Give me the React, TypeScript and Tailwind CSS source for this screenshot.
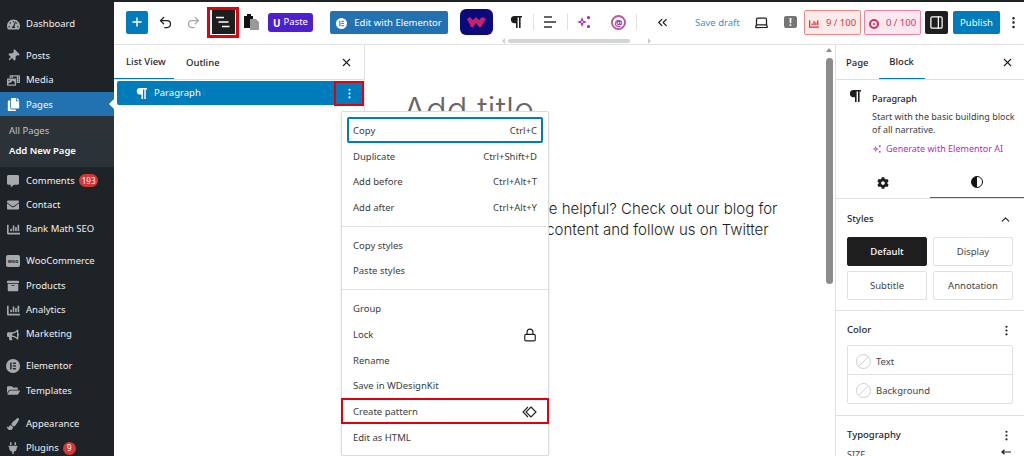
import { ChevronUp, ChevronsLeft, Laptop, Lock, MoreVertical, PanelRight, Plus, Redo2, Undo2, X } from "lucide-react";
import type { ReactNode } from "react";
import {
  FaChartBar,
  FaCog,
  FaCommentAlt,
  FaCopy,
  FaEnvelope,
  FaFolderOpen,
  FaPaintBrush,
  FaPlug,
  FaTachometerAlt,
  FaThumbtack,
  FaArchive,
  FaBullhorn,
  FaPhotoVideo,
} from "react-icons/fa";

function ElementorIcon({ size = 14, dark = "#a7aaad", light = "#1d2327" }: { size?: number; dark?: string; light?: string }) {
  return (
    <svg width={size} height={size} viewBox="0 0 14 14">
      <circle cx="7" cy="7" r="7" fill={dark} />
      <rect x="4.2" y="3.6" width="1.4" height="6.8" fill={light} />
      <rect x="6.8" y="3.6" width="3.2" height="1.3" fill={light} />
      <rect x="6.8" y="6.3" width="3.2" height="1.3" fill={light} />
      <rect x="6.8" y="9.1" width="3.2" height="1.3" fill={light} />
    </svg>
  );
}

function PilcrowIcon({ size = 14, className = "" }: { size?: number; className?: string }) {
  return (
    <svg width={size} height={size} viewBox="0 0 14 14" fill="currentColor" className={className}>
      <path d="M5.5 1H13v1.6h-1.4V13H10V2.6H8.6V13H7V8.2H5.5a3.6 3.6 0 010-7.2z" />
    </svg>
  );
}

function ListIcon({ color = "#fff" }: { color?: string }) {
  return (
    <svg width="16" height="14" viewBox="0 0 16 14" stroke={color} strokeWidth="1.5">
      <path d="M1 2.5h8M3.5 7h10M7 11.5h7.5" />
    </svg>
  );
}

function Sparkles({ size = 16, color = "#a21caf" }: { size?: number; color?: string }) {
  return (
    <svg width={size} height={size} viewBox="0 0 16 16" fill={color}>
      <path d="M6 3l1.3 3.7L11 8 7.3 9.3 6 13 4.7 9.3 1 8l3.7-1.3L6 3zm0 3.2L5.5 7.5 4.2 8l1.3.5.5 1.3.5-1.3L7.8 8l-1.3-.5L6 6.2z" fillRule="evenodd" />
      <circle cx="12.5" cy="3.5" r="1.5" />
      <circle cx="12.5" cy="12.5" r="1.5" />
    </svg>
  );
}

function MenuItem({ icon, label, badge, className = "" }: { icon: ReactNode; label: string; badge?: string; className?: string }) {
  return (
    <div className={`flex h-[24.4px] items-center pt-[2px] text-[#f0f0f1] ${className}`}>
      <span className="flex w-[26px] justify-center text-[#a7aaad]">{icon}</span>
      <span>{label}</span>
      {badge && <span className="ml-[4px] flex h-[13px] min-w-[13px] items-center justify-center rounded-full bg-[#d63638] px-[3px] text-[8px] text-white">{badge}</span>}
    </div>
  );
}

function AdminSidebar() {
  return (
    <aside className="w-[114px] shrink-0 bg-[#1d2327] pt-[9px]">
      <MenuItem icon={<FaTachometerAlt size={13} />} label="Dashboard" />
      <div className="h-[7.5px]" />
      <MenuItem icon={<FaThumbtack size={12} className="rotate-45" />} label="Posts" />
      <MenuItem icon={<FaPhotoVideo size={13} />} label="Media" />
      <div className="relative flex h-[24.4px] items-center bg-[#2271b1] pt-[2px] text-white">
        <span className="flex w-[26px] justify-center"><FaCopy size={13} /></span>
        <span>Pages</span>
        <span className="absolute right-0 top-[7px] h-0 w-0 border-y-[5px] border-r-[5px] border-y-transparent border-r-white" />
      </div>
      <div className="h-[51px] bg-[#2c3338] pt-[3px]">
        <div className="flex h-[24px] items-center pl-[9px] text-[#c3c4c7]">All Pages</div>
        <div className="flex h-[17px] items-center pl-[9px] font-semibold text-white">Add New Page</div>
      </div>
      <MenuItem icon={<FaCommentAlt size={12} />} label="Comments" badge="193" className="mt-[0.5px]" />
      <MenuItem icon={<FaEnvelope size={12} />} label="Contact" />
      <MenuItem icon={<FaChartBar size={13} />} label="Rank Math SEO" />
      <div className="h-[7.5px]" />
      <MenuItem
        icon={<span className="flex h-[12px] w-[14px] items-center justify-center rounded-[2px] bg-[#a7aaad] text-[5px] font-bold text-[#1d2327]">woo</span>}
        label="WooCommerce"
      />
      <MenuItem icon={<FaArchive size={12} />} label="Products" />
      <MenuItem icon={<FaChartBar size={13} />} label="Analytics" />
      <MenuItem icon={<FaBullhorn size={12} />} label="Marketing" />
      <div className="h-[7.5px]" />
      <MenuItem icon={<ElementorIcon />} label="Elementor" />
      <MenuItem icon={<FaFolderOpen size={13} />} label="Templates" />
      <div className="h-[8.5px]" />
      <MenuItem icon={<FaPaintBrush size={12} />} label="Appearance" />
      <MenuItem icon={<FaPlug size={12} />} label="Plugins" badge="9" />
    </aside>
  );
}

function TopBar() {
  return (
    <header className="relative flex h-[43px] shrink-0 items-center whitespace-nowrap border-b border-[#e3e3e3] bg-white pb-[2px] pl-[12px]">
      <button className="flex h-[23px] w-[22px] items-center justify-center rounded-[2px] bg-[#007cba] text-white"><Plus size={14} strokeWidth={2.5} /></button>
      <Undo2 size={15} className="ml-[10px] text-[#1e1e1e]" />
      <Redo2 size={15} className="ml-[13px] text-[#a5a5a5]" />
      <div className="ml-[6px] flex h-[31px] w-[32px] items-center justify-center border-[3px] border-[#e2000f] bg-white">
        <div className="flex h-[24px] w-[23px] items-center justify-center bg-[#1e1e1e]"><ListIcon /></div>
      </div>
      <svg width="17" height="18" viewBox="0 0 17 18" className="ml-[4px]">
        <path d="M1 3h3V1h4v2h2v12H1z" fill="#111" />
        <path d="M7 6h6l3 3v8H7z" fill="#999" />
      </svg>
      <div className="ml-[8px] flex h-[19px] w-[45px] items-center justify-center gap-[3px] rounded-[3px] bg-[#4f1fcf] pt-[1px] text-white">
        <span className="text-[10px] font-bold leading-none">U</span>
        <span>Paste</span>
      </div>
      <button className="ml-[17px] flex h-[23px] w-[118px] items-center justify-center gap-[7px] rounded-[2px] bg-[#2271b1] pt-[2px] text-white">
        <ElementorIcon size={11} dark="#fff" light="#2271b1" />
        <span>Edit with Elementor</span>
      </button>
      <div className="ml-[12px] flex h-[26px] w-[33px] items-center justify-center rounded-[6px] bg-[#0a0a7d]">
        <svg width="19" height="10" viewBox="0 0 19 10" fill="#c4226f">
          <path d="M0 2l3-2 3 3 3-3 3 3 3-3 4 2-5 8-2 0-3-4-3 4-2 0z" />
        </svg>
      </div>
      <PilcrowIcon className="ml-[16px] text-[#1e1e1e]" />
      <span className="ml-[10px] h-[16px] w-px bg-[#e0e0e0]" />
      <svg width="13" height="12" viewBox="0 0 13 12" stroke="#333" strokeWidth="1.4" className="ml-[10px]">
        <path d="M0 1h8M0 6h12M0 11h8" />
      </svg>
      <span className="ml-[10px] h-[16px] w-px bg-[#e0e0e0]" />
      <span className="ml-[8px]"><Sparkles /></span>
      <span className="ml-[19px] flex h-[15px] w-[15px] items-center justify-center rounded-full border-[2px] border-[#c0569b] text-[9px] font-bold leading-none text-[#8e2f9e]">@</span>
      <span className="ml-[10px] h-[16px] w-px bg-[#e0e0e0]" />
      <ChevronsLeft size={15} className="ml-[18px] text-[#1e1e1e]" />
      <span className="ml-[25px] w-[41px] pt-[2px] text-[#3d92c9]">Save draft</span>
      <Laptop size={15} className="ml-[18px] text-[#1e1e1e]" />
      <span className="ml-[15px] flex h-[12px] w-[13px] items-center justify-center rounded-[2px] bg-[#757575] text-[10px] font-bold text-white">!</span>
      <div className="ml-[7px] flex h-[25px] w-[57px] items-center justify-center gap-[7px] rounded-[2px] border border-[#ee8a85] bg-[#fdeaea] pt-[3px] text-[#d63638]">
        <FaChartBar size={10} />
        <span>9 / 100</span>
      </div>
      <div className="ml-[3px] flex h-[25px] w-[57px] items-center justify-center gap-[7px] rounded-[2px] border border-[#f080a5] bg-[#fde8f0] pt-[3px] text-[#d1305e]">
        <span className="flex h-[10px] w-[10px] items-center justify-center rounded-full border-[2px] border-[#d1305e]">
          <span className="h-[2px] w-[2px] rounded-full bg-[#d1305e]" />
        </span>
        <span>0 / 100</span>
      </div>
      <div className="ml-[4px] flex h-[23px] w-[23px] items-center justify-center rounded-[2px] bg-[#1e1e1e] text-white"><PanelRight size={15} /></div>
      <button className="ml-[5px] flex h-[23px] w-[47px] items-center justify-center rounded-[2px] bg-[#007cba] pt-[2px] text-white">Publish</button>
      <MoreVertical size={15} className="ml-[6px] text-[#1e1e1e]" />
      <div className="absolute bottom-[1px] left-[388px] flex h-[4px] items-center">
        <span className="h-0 w-0 border-y-[3px] border-r-[3px] border-y-transparent border-r-[#ccc]" />
        <span className="ml-[3px] h-[4px] w-[122px] rounded-full bg-[#d4d4d4]" />
        <span className="ml-[18px] h-0 w-0 border-y-[3px] border-l-[3px] border-y-transparent border-l-[#ccc]" />
      </div>
    </header>
  );
}

function ListViewPanel() {
  return (
    <section className="w-[251px] shrink-0 border-r border-[#e0e0e0] bg-white">
      <div className="flex h-[35px] items-stretch border-b border-[#e0e0e0] text-[#1e1e1e]">
        <div className="flex w-[60px] items-center border-b-[1px] border-[#007cba] pl-[12px] pt-[2px] font-medium">List View</div>
        <div className="ml-[12px] flex items-center pt-[2px] font-medium">Outline</div>
        <X size={13} className="ml-auto mr-[11px] self-center" />
      </div>
      <div className="ml-[3px] mt-[1px] flex h-[24px] items-center rounded-[2px] bg-[#007cba] text-white">
        <PilcrowIcon size={13} className="ml-[18px]" />
        <span className="ml-[6px] pt-[1px]">Paragraph</span>
        <div className="ml-auto flex h-[25px] w-[30px] items-center justify-center border-[2px] border-[#e2000f]"><MoreVertical size={13} /></div>
      </div>
    </section>
  );
}

function Row({ label, right }: { label: string; right?: ReactNode }) {
  return (
    <div className="flex h-[25.7px] items-center justify-between px-[11px] pt-[2px] text-[#3c3c3c]">
      <span>{label}</span>
      {right && <span>{right}</span>}
    </div>
  );
}

function BlockMenu() {
  return (
    <div className="absolute left-[227px] top-[66px] w-[208px] rounded-[2px] border border-[#dcdcdc] bg-white py-[5px] shadow-sm">
      <div className="mx-[5px] flex h-[26px] items-center justify-between rounded-[2px] border-[2px] border-[#007cba] px-[4px] pt-[2px] text-[#3c3c3c]">
        <span>Copy</span>
        <span>Ctrl+C</span>
      </div>
      <Row label="Duplicate" right="Ctrl+Shift+D" />
      <Row label="Add before" right="Ctrl+Alt+T" />
      <Row label="Add after" right="Ctrl+Alt+Y" />
      <div className="my-[5.5px] border-t border-[#e0e0e0]" />
      <Row label="Copy styles" />
      <Row label="Paste styles" />
      <div className="my-[5.5px] border-t border-[#e0e0e0]" />
      <Row label="Group" />
      <Row label="Lock" right={<Lock size={14} className="text-[#1e1e1e]" />} />
      <Row label="Rename" />
      <Row label="Save in WDesignKit" />
      <div className="-mx-px flex h-[26px] items-center justify-between border-[2px] border-[#e2000f] px-[10px] pt-[2px] text-[#3c3c3c]">
        <span>Create pattern</span>
        <svg width="15" height="12" viewBox="0 0 15 12" fill="none" stroke="#1e1e1e" strokeWidth="1.1">
          <path d="M9 1l5 5-5 5-5-5zM6 1L1 6l5 5" />
        </svg>
      </div>
      <Row label="Edit as HTML" />
    </div>
  );
}

function Canvas() {
  return (
    <main className="relative min-w-0 flex-1 overflow-hidden bg-white pl-[38px] [font-family:Inter,sans-serif]">
      <h1 className="mt-[43px] whitespace-nowrap text-[34.5px] font-light leading-[44px] text-[#666]">Add title</h1>
      <p className="-ml-[5px] mt-[66px] whitespace-nowrap text-[15px] font-light leading-[21px] text-[#1e1e1e]">Did you find this article helpful? Check out our blog for</p>
      <p className="-ml-[12px] whitespace-nowrap text-[15px] font-light leading-[21px] text-[#1e1e1e]">even more interesting content and follow us on Twitter</p>
      <div className="absolute right-[2px] top-[13px] h-[226px] w-[7px] rounded-full bg-[#8c8c8c]" />
      <span className="absolute right-[3px] top-[3px] h-0 w-0 border-x-[3px] border-b-[4px] border-x-transparent border-b-[#8c8c8c]" />
    </main>
  );
}

function StyleButton({ label, active }: { label: string; active?: boolean }) {
  return (
    <div className={`flex h-[29px] items-center justify-center rounded-[2px] border pt-[2px] ${active ? "border-[#1e1e1e] bg-[#1e1e1e] font-medium text-white" : "border-[#e0e0e0] bg-white text-[#444]"}`}>
      {label}
    </div>
  );
}

function SettingsPanel() {
  return (
    <aside className="w-[189px] shrink-0 border-l border-[#e0e0e0] bg-white text-[#1e1e1e]">
      <div className="flex h-[35px] items-stretch border-b border-[#e0e0e0]">
        <span className="ml-[10px] flex items-center pt-[2px] font-medium">Page</span>
        <span className="ml-[10px] flex w-[46px] items-center justify-center border-b-[1px] border-[#007cba] pt-[2px] font-medium">Block</span>
        <X size={13} className="ml-auto mr-[10px] self-center" />
      </div>
      <div className="flex pl-[12px] pr-[8px] pt-[9px] text-[9px]">
        <PilcrowIcon />
        <div className="ml-[10px] min-w-0">
          <div className="pt-[1px] font-medium leading-[17px]">Paragraph</div>
          <p className="mt-[2.5px] leading-[13px] text-[#3c3c3c]">Start with the basic building block of all narrative.</p>
          <div className="mt-[5.5px] flex items-center gap-[4px] whitespace-nowrap pt-[1px] leading-[14px] text-[#c026c0]">
            <Sparkles size={10} color="#c026c0" />
            Generate with Elementor AI
          </div>
        </div>
      </div>
      <div className="mt-[11px] flex h-[32px] border-b border-[#e0e0e0]">
        <div className="flex w-[94px] items-center justify-center"><FaCog size={12} /></div>
        <div className="flex flex-1 items-center justify-center border-b-[1px] border-[#007cba]">
          <span className="h-[12px] w-[12px] rounded-full border-[1.5px] border-[#111] bg-[linear-gradient(90deg,#111_50%,#fff_50%)]" />
        </div>
      </div>
      <div className="border-b border-[#e0e0e0] px-[11px] pb-[10px] pt-[10px]">
        <div className="flex items-center justify-between pr-[1px] pt-[2px] font-medium leading-[16px]">
          Styles <ChevronUp size={13} />
        </div>
        <div className="mt-[10px] grid grid-cols-2 gap-x-[6px] gap-y-[5px]">
          <StyleButton label="Default" active />
          <StyleButton label="Display" />
          <StyleButton label="Subtitle" />
          <StyleButton label="Annotation" />
        </div>
      </div>
      <div className="border-b border-[#e0e0e0] px-[11px] pb-[11px] pt-[9px]">
        <div className="flex items-center justify-between pt-[2px] font-medium leading-[16px]">
          Color <MoreVertical size={13} />
        </div>
        <div className="mt-[7px] rounded-[2px] border border-[#e0e0e0]">
          <ColorRow label="Text" />
          <div className="border-t border-[#e0e0e0]" />
          <ColorRow label="Background" />
        </div>
      </div>
      <div className="px-[11px] pt-[9px]">
        <div className="flex items-center justify-between pt-[2px] font-medium leading-[16px]">
          Typography <MoreVertical size={13} />
        </div>
        <div className="mt-[7px] flex items-start justify-between pr-[2px] text-[9px] uppercase leading-[10px] text-[#444]">
          Size
          <svg width="10" height="6" viewBox="0 0 10 6" stroke="#1e1e1e" strokeWidth="1.2" fill="none" className="-mt-[1px]">
            <path d="M10 3H1M3.5 .8L1 3l2.5 2.2" />
          </svg>
        </div>
      </div>
    </aside>
  );
}

function ColorRow({ label }: { label: string }) {
  return (
    <div className="flex h-[28px] items-center pl-[8px] pt-[2px] text-[#444]">
      <svg width="15" height="15" viewBox="0 0 15 15" fill="none" stroke="#cfcfcf">
        <circle cx="7.5" cy="7.5" r="7" />
        <path d="M3 12L12 3" />
      </svg>
      <span className="ml-[5px] pt-[2px]">{label}</span>
    </div>
  );
}

export default function App() {
  return (
    <div className="flex h-[456px] w-[1024px] overflow-hidden border-t-[2px] border-[#1d2327] bg-white text-[9.5px] [font-family:'Noto_Sans',sans-serif] [&_svg]:shrink-0">
      <AdminSidebar />
      <div className="flex min-w-0 flex-1 flex-col">
        <TopBar />
        <div className="relative flex min-h-0 flex-1">
          <ListViewPanel />
          <Canvas />
          <SettingsPanel />
          <BlockMenu />
        </div>
      </div>
    </div>
  );
}
